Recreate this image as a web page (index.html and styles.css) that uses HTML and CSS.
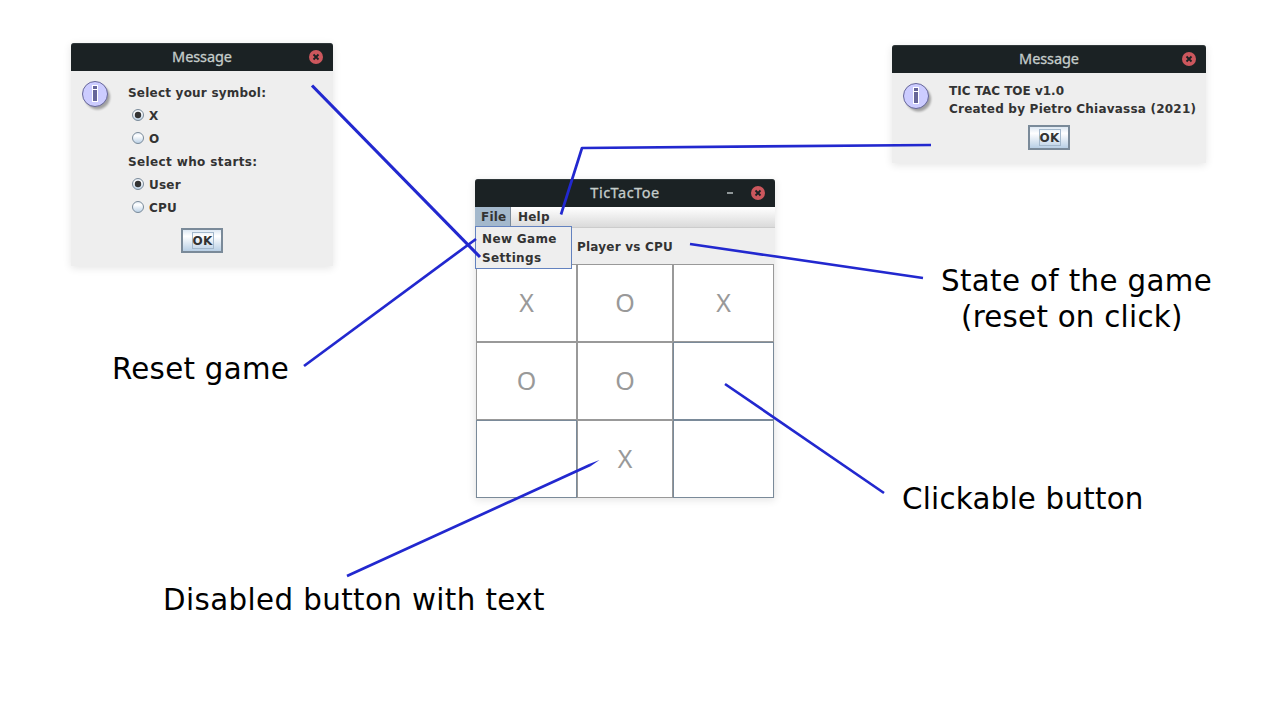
FILE: index.html
```html
<!DOCTYPE html>
<html lang="en">
<head>
<meta charset="utf-8">
<title>TicTacToe</title>
<link rel="stylesheet" href="styles.css">
</head>
<body>
<svg class="defs" width="0" height="0">
  <defs>
    <linearGradient id="steel" x1="0" y1="0" x2="0" y2="1"><stop offset="0" stop-color="#dde8f3"/><stop offset=".3" stop-color="#fff"/><stop offset="1" stop-color="#b8cfe5"/></linearGradient>
    <symbol id="close" viewBox="0 0 14 14"><circle cx="7" cy="7" r="7" fill="#cc575d"/><path d="M4.500 4.500l5 5M9.500 4.500l-5 5" stroke="#1b2224" stroke-width="1.800"/></symbol>
    <symbol id="info" viewBox="0 0 32 32"><circle cx="15.500" cy="16" r="12.500" fill="#000" opacity=".32" filter="url(#soft)"/><circle cx="13" cy="13" r="12.500" fill="#ccccff" stroke="#666699"/><path d="M10 4h6v4.500h-6zM10 8.500h6v12.500h-6z" fill="#fff"/><path d="M11 5h4v3h-4zM11 9h4v11h-4z" fill="#666699"/></symbol>
    <symbol id="radio" viewBox="0 0 12 12"><circle cx="6" cy="6" r="5.500" fill="url(#steel)" stroke="#7a8a99"/></symbol>
    <symbol id="radio-on" viewBox="0 0 12 12"><circle cx="6" cy="6" r="5.500" fill="url(#steel)" stroke="#7a8a99"/><circle cx="6" cy="6" r="3.200" fill="#333"/></symbol>
    <filter id="soft" x="-20%" y="-20%" width="140%" height="140%"><feGaussianBlur stdDeviation="1.200"/></filter>
  </defs>
</svg>
<main class="canvas">
  <section class="window settings">
    <header class="title"><span>Message</span><svg class="close"><use href="#close"/></svg></header>
    <div class="body">
      <svg class="info"><use href="#info"/></svg>
      <div class="options">
        <p>Select your symbol:</p>
        <label><svg><use href="#radio-on"/></svg>X</label>
        <label><svg><use href="#radio"/></svg>O</label>
        <p class="starter">Select who starts:</p>
        <label><svg><use href="#radio-on"/></svg>User</label>
        <label><svg><use href="#radio"/></svg>CPU</label>
      </div>
    </div>
    <button class="ok"><span>OK</span></button>
  </section>

  <section class="window about">
    <header class="title"><span>Message</span><svg class="close"><use href="#close"/></svg></header>
    <div class="body">
      <svg class="info"><use href="#info"/></svg>
      <div class="lines"><p class="version">TIC TAC TOE v1.0</p><p>Created by Pietro Chiavassa (2021)</p></div>
    </div>
    <button class="ok"><span>OK</span></button>
  </section>

  <section class="window game">
    <header class="title wide"><span>TicTacToe</span><i class="minimize"></i><svg class="close"><use href="#close"/></svg></header>
    <nav class="menubar"><span class="menu open">File</span><span class="menu">Help</span></nav>
    <div class="status">Player vs CPU</div>
    <div class="board">
      <div class="cell off">X</div><div class="cell off">O</div><div class="cell off">X</div>
      <div class="cell off">O</div><div class="cell off">O</div><div class="cell"></div>
      <div class="cell"></div><div class="cell off">X</div><div class="cell"></div>
    </div>
    <div class="dropdown"><span>New Game</span><span>Settings</span></div>
  </section>

  <svg class="pointers" viewBox="0 0 1280 720">
    <path class="thick" d="M312 85.500L480 257"/>
    <path d="M304 366L476 239"/>
    <path d="M561 214.500L582 148L931 145"/>
    <path d="M690 244L923 278"/>
    <path d="M725 384L884 493"/>
    <path d="M347 576L590 465"/>
    <path class="tip" d="M589 464L599.500 460L590.500 466.200z"/>
  </svg>
  <p class="note reset">Reset game</p>
  <p class="note state"><span>State of the game</span><span class="second">(reset on click)</span></p>
  <p class="note clickable">Clickable button</p>
  <p class="note disabled">Disabled button with text</p>
</main>
</body>
</html>
```
FILE: styles.css
```css
* { box-sizing: border-box; }
body { margin: 0; background: #fff; font: bold 12px/18px "DejaVu Sans", sans-serif; letter-spacing: .22px; color: #333; overflow: hidden; }
p { margin: 0; }
.defs { position: absolute; }
.canvas { position: relative; width: 1280px; height: 720px; overflow: hidden; white-space: nowrap; }
.window { position: absolute; display: flex; flex-direction: column; background: #eee; border-radius: 3px 3px 0 0; box-shadow: 0 2px 9px rgba(0,0,0,.11); }
.settings { left: 71px; top: 43px; width: 262px; height: 223px; }
.about { left: 892px; top: 45px; width: 314px; height: 118px; }
.game { left: 475px; top: 179px; width: 300px; height: 319px; }
.title { position: relative; flex: none; height: 28px; padding-bottom: 3px; display: flex; justify-content: center; align-items: center; background: #1b2224; border-top: 1px solid #30383a; border-radius: 3px 3px 0 0; color: #c5cdcb; font: 14.500px/24px "Noto Sans", sans-serif; letter-spacing: -.1px; -webkit-text-stroke: .3px #c5cdcb; }
.title.wide { letter-spacing: .5px; }
.close { position: absolute; right: 10px; top: 6px; width: 14px; height: 14px; }
.minimize { position: absolute; right: 42px; top: 12px; width: 6px; height: 2px; background: #8f9798; }
.body { display: flex; padding: 10px 0 0 11px; }
.info { flex: none; width: 32px; height: 32px; margin-right: 14px; }
.options { display: flex; flex-direction: column; }
.options p, .options label { height: 23px; line-height: 24px; }
.options .starter { letter-spacing: .38px; }
.options label { display: flex; padding-left: 4px; gap: 5px; }
.options label svg { width: 12px; height: 12px; margin-top: 5px; }
.ok { align-self: center; width: 42px; height: 25px; padding: 0 0 0 1px; border: 2px solid #7a8a99; background: linear-gradient(#dde8f3, #fff 30%, #b8cfe5); display: flex; justify-content: center; align-items: center; font: bold 12px/16px "DejaVu Sans", sans-serif; letter-spacing: .2px; color: #333; }
.ok span { width: 22px; height: 17px; border: 1px solid #a3b8cc; display: flex; justify-content: center; }
.settings .ok { margin-top: 9px; }
.about .ok { margin-top: 8px; }
.lines { height: 35px; margin-top: -1px; }
.version { letter-spacing: 0; }
.menubar { display: flex; height: 21px; background: linear-gradient(#fff, #dadada); border-bottom: 1px solid #ccc; line-height: 20px; }
.menu { padding: 0 7px; }
.menu.open { width: 36px; height: 19px; padding: 0 0 0 6px; background: #a3b8cc; border-right: 1px solid #7a8a99; }
.status { height: 36px; line-height: 38px; text-align: center; }
.board { display: grid; grid-template-columns: 101px 96px 101px; grid-template-rows: repeat(3, 78px); margin-left: 1px; width: 298px; }
.cell { border: 1px solid #7a8a99; background: #fff; display: flex; align-items: center; justify-content: center; padding-bottom: 2px; font: 25px/30px "Noto Sans", sans-serif; letter-spacing: 0; color: #999; }
.cell.off { border-color: #999; }
.dropdown { position: absolute; left: 0; top: 47px; width: 97px; height: 43px; padding: 3px 6px 1px; border: 1px solid #6382bf; background: #eee; display: flex; flex-direction: column; line-height: 19px; letter-spacing: .35px; }
.pointers { position: absolute; left: 0; top: 0; width: 1280px; height: 720px; fill: none; stroke: #2228cf; stroke-width: 2.700; stroke-linejoin: round; }
.pointers .thick { stroke-width: 3.200; }
.pointers .tip { fill: #2228cf; stroke: none; }
.note { position: absolute; font: 29.300px/36px "DejaVu Sans", sans-serif; letter-spacing: .36px; color: #000; }
.note span { display: block; }
.reset { left: 112px; top: 351px; letter-spacing: .28px; }
.state { left: 941px; top: 263px; }
.state .second { margin-left: 20px; letter-spacing: .25px; }
.clickable { left: 902px; top: 481px; letter-spacing: .23px; }
.disabled { left: 163px; top: 582px; letter-spacing: .4px; }
```
